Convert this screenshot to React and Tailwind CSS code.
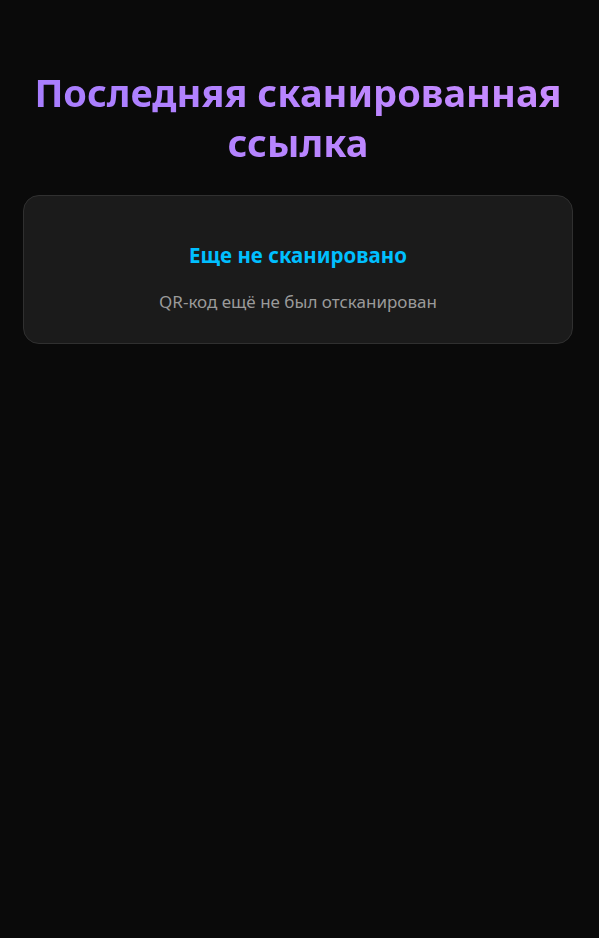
export default function App() {
  return (
    <div className="min-h-[938px] bg-[#0a0a0a] pl-[23px] pr-[26px] pt-[67px]" style={{ fontFamily: '"Noto Sans", "Open Sans", sans-serif' }}>
      <h1 className="text-center text-[38px] font-bold leading-[50px] bg-gradient-to-r from-[#a77dff] to-[#c98cff] bg-clip-text text-transparent">
        Последняя сканированная ссылка
      </h1>
      <div className="mt-[28px] rounded-[16px] border border-[#303030] bg-[#1b1b1b] h-[149px] pt-[15px] flex flex-col items-center justify-center">
        <div className="text-[20.5px] font-bold text-[#00bfff] leading-[28px]">Еще не сканировано</div>
        <div className="mt-[21px] text-[17px] text-[#9a9a9a] leading-[24px]">QR-код ещё не был отсканирован</div>
      </div>
    </div>
  );
}
